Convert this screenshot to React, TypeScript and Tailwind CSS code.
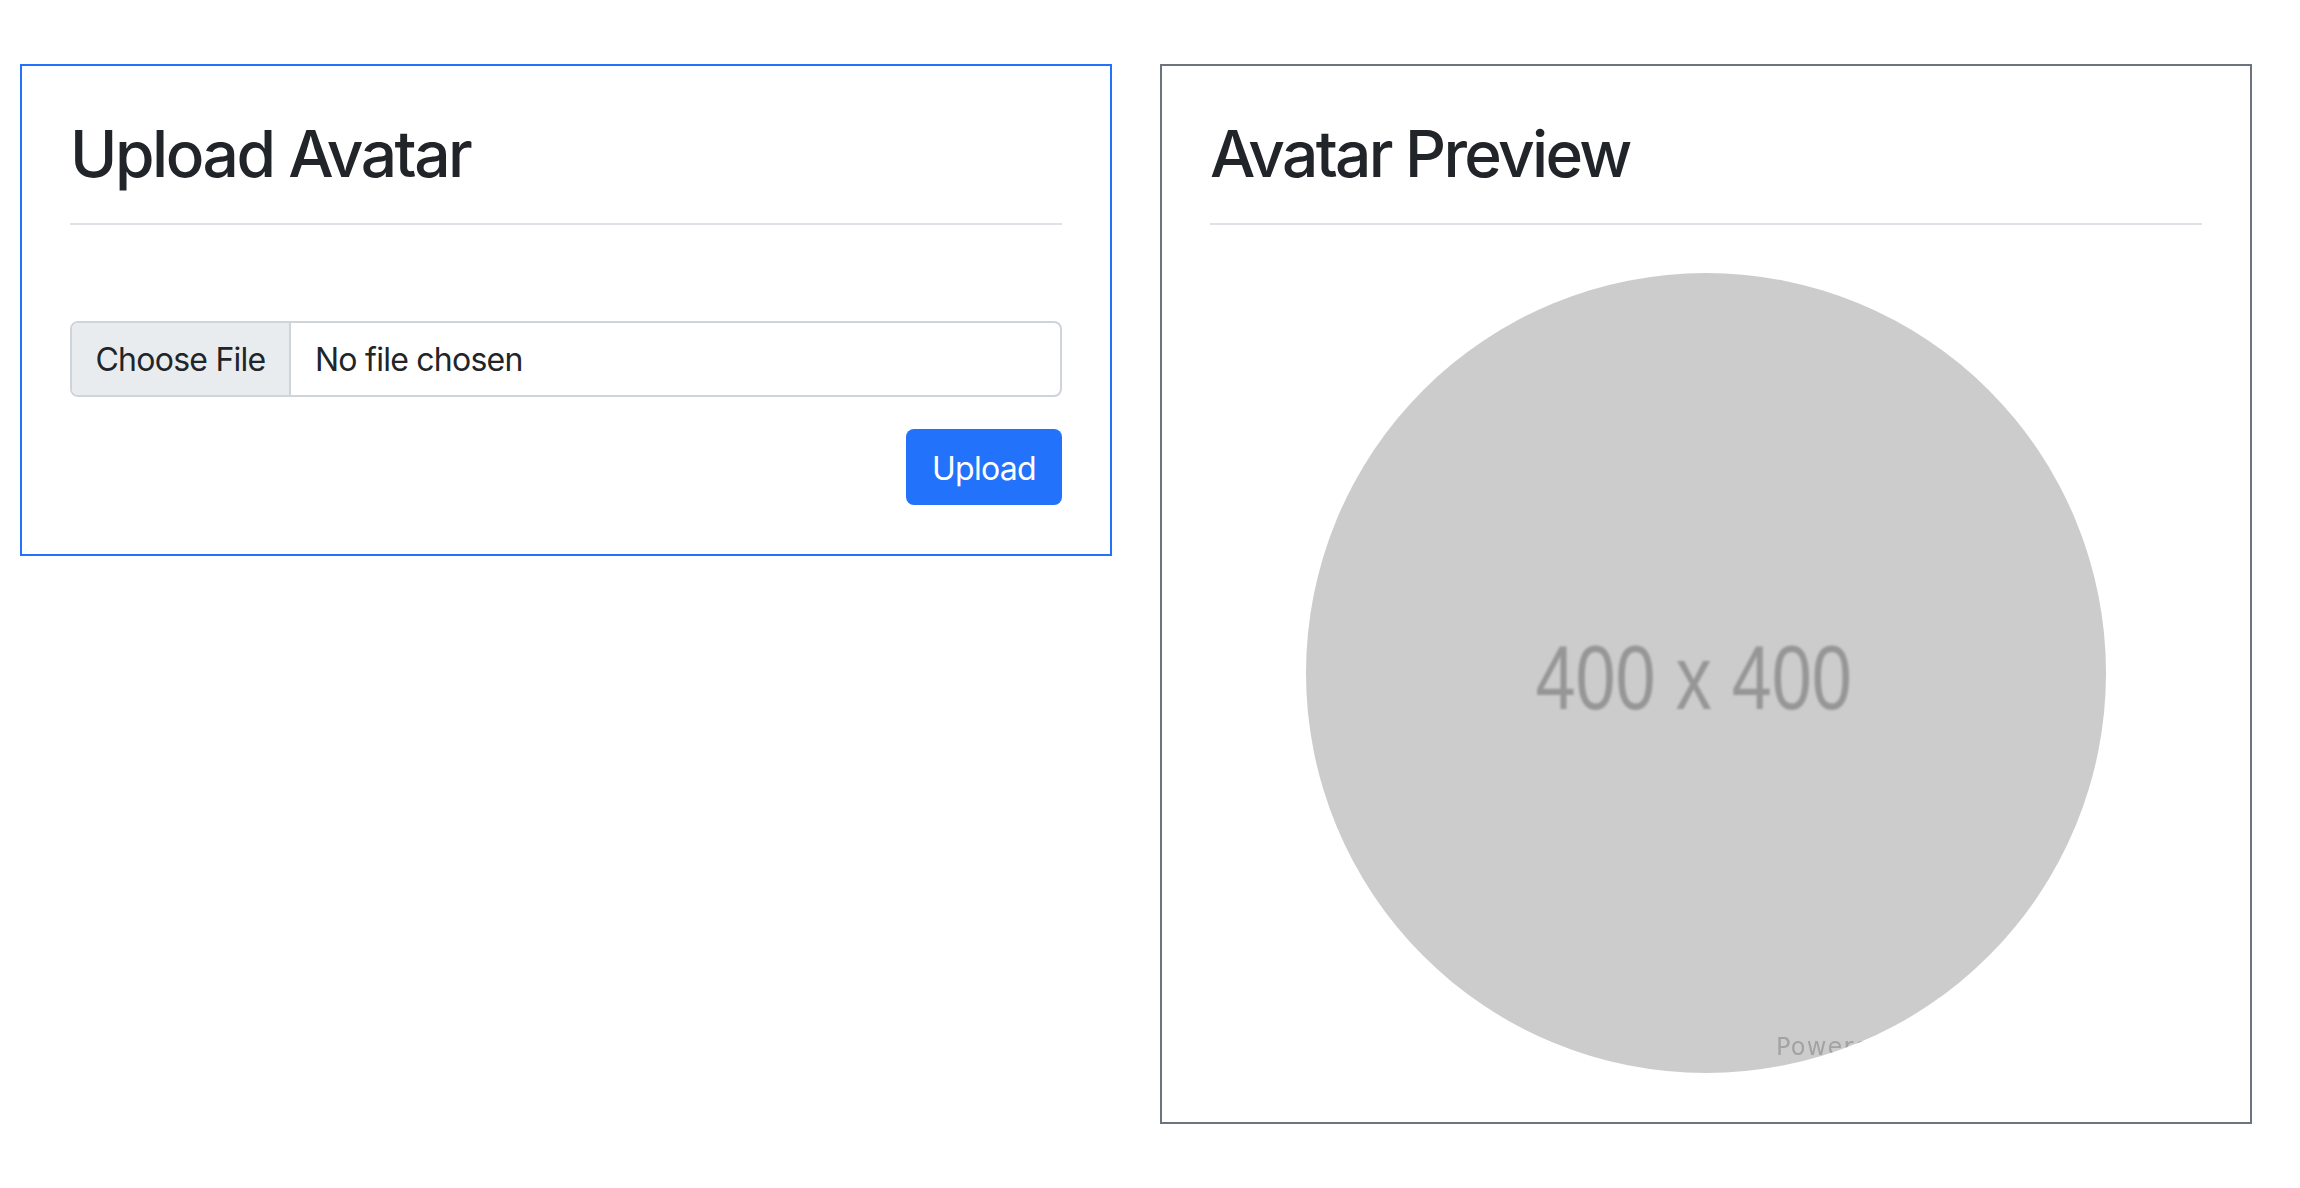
const font = "font-['Inter','Liberation_Sans',sans-serif]";

export default function App() {
  return (
    <div className={`min-h-screen bg-white pt-16 pl-5 pr-12 text-[#212529] ${font}`}>
      <div className="flex items-start gap-12">
        <section className="w-[1092px] border-2 border-[#2272fb] p-12 pb-[49px]">
          <h2 className="text-[64px] leading-[80px] font-medium tracking-[-2.45px]">Upload Avatar</h2>
          <hr className="mt-[29px] h-0.5 border-0 bg-[#dee2e6]" />
          <div className="mt-24 flex h-[76px] items-stretch overflow-hidden rounded-lg border-2 border-[#ced4da] text-[32px] tracking-[-0.75px]">
            <div className="flex w-[219px] items-center justify-center border-r-2 border-[#ced4da] bg-[#e9ecef] pt-0.5">Choose File</div>
            <div className="flex items-center pt-0.5 pl-6">No file chosen</div>
          </div>
          <div className="mt-8 flex justify-end">
            <button className="h-[76px] rounded-lg bg-[#2272fb] px-[26px] pt-1 text-[32px] tracking-[-0.7px] text-white">Upload</button>
          </div>
        </section>
        <section className="w-[1092px] border-2 border-[#6c757d] p-12 pb-[49px]">
          <h2 className="text-[64px] leading-[80px] font-medium tracking-[-2.7px]">Avatar Preview</h2>
          <hr className="mt-[29px] h-0.5 border-0 bg-[#dee2e6]" />
          <div className="relative mx-auto mt-12 flex size-[800px] items-center justify-center overflow-hidden rounded-full bg-[#cccccc]">
            <span className="-ml-6 scale-x-[0.8] pt-[10px] font-['Liberation_Sans',sans-serif] text-[90px] whitespace-nowrap text-[#969696] blur-[1px]">400 x 400</span>
            <span className="absolute top-[756px] left-[470px] font-['DejaVu_Sans',sans-serif] text-[24px] tracking-wider whitespace-nowrap text-[#a3a3a3] blur-[0.7px]">Powered by</span>
          </div>
        </section>
      </div>
    </div>
  );
}
